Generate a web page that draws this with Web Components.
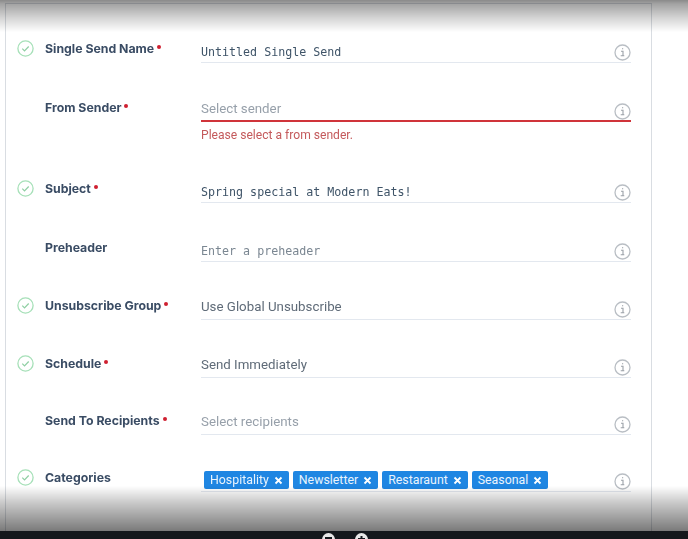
<!DOCTYPE html>
<html><head><meta charset="utf-8"><style>
html,body{margin:0;height:539px;overflow:hidden;background:#fff}
</style></head><body>
<send-form>
<form-row label="Single Send Name" required valid gap="31"><field-value mono>Untitled Single Send</field-value></form-row>
<form-row label="From Sender" required gap="31" error="Please select a from sender."><field-value muted>Select sender</field-value></form-row>
<form-row label="Subject" required valid gap="31"><field-value mono>Spring special at Modern Eats!</field-value></form-row>
<form-row label="Preheader" gap="31"><field-value mono muted>Enter a preheader</field-value></form-row>
<form-row label="Unsubscribe Group" required valid gap="30"><field-value>Use Global Unsubscribe</field-value></form-row>
<form-row label="Schedule" required valid gap="30"><field-value>Send Immediately</field-value></form-row>
<form-row label="Send To Recipients" required gap="29"><field-value muted>Select recipients</field-value></form-row>
<form-row label="Categories" valid gap="29"><tag-list><cat-tag>Hospitality</cat-tag><cat-tag>Newsletter</cat-tag><cat-tag>Restaraunt</cat-tag><cat-tag>Seasonal</cat-tag></tag-list></form-row>
</send-form>
<script>
function def(name,html,init){customElements.define(name,class extends HTMLElement{constructor(){super();this.attachShadow({mode:'open'}).innerHTML=html;}connectedCallback(){if(init)init(this,this.shadowRoot);}});}
def('send-form',`<style>
:host{display:block;position:relative;height:539px;overflow:hidden;font-family:"Inter","Liberation Sans",sans-serif}
.panel{box-sizing:border-box;height:528px;margin:3px 36px 0 5px;border:1px solid #d9dde2;border-bottom:0;filter:blur(.3px)}
.top,.bottom{position:absolute;left:0;right:0;pointer-events:none}
.top{top:0;height:32px;background:linear-gradient(rgba(0,0,0,.46) 0,rgba(0,0,0,.36) 4px,rgba(0,0,0,.18) 17px,rgba(0,0,0,0) 100%)}
.bottom{top:486px;height:45px;background:linear-gradient(rgba(0,0,0,0),rgba(0,0,0,.2) 35%,rgba(0,0,0,.52) 100%)}
.bar{position:absolute;left:0;right:0;top:531px;height:8px;background:#14181c;overflow:hidden}
.btn{position:absolute;top:2px;width:13px;height:13px;border-radius:50%;background:#e8e8e8}
.btn svg{display:block}
</style><div class="panel"><slot></slot></div><div class="top"></div><div class="bottom"></div>
<div class="bar"><span class="btn" style="left:322px"><svg width="13" height="13"><path d="M3 5h7" stroke="#14181c" stroke-width="2"/></svg></span><span class="btn" style="left:355px"><svg width="13" height="13"><path d="M3 6h7M6.500 3v6" stroke="#14181c" stroke-width="2"/></svg></span></div>`);
def('form-row',`<style>
:host{display:flex;align-items:flex-start;padding-left:11px;padding-right:20px;font-family:"Inter","Liberation Sans",sans-serif}
.check{flex:0 0 17px;width:17px;height:17px;margin-top:5px;margin-right:11px}
.check svg{display:block}
.label{flex:0 0 156px;box-sizing:border-box;padding-top:4.500px;font:700 12.3px/18px "Inter","Liberation Sans",sans-serif;color:#3a4c64;white-space:nowrap}
.dot{display:inline-block;width:4px;height:4px;border-radius:50%;background:#cf1f30;margin-left:3px;vertical-align:4px}
.main{flex:1;min-width:0}
.box{box-sizing:border-box;height:28px;display:flex;align-items:flex-end;justify-content:space-between;border-bottom:1px solid #e3e8ef;padding-bottom:3px}
.box.err{border-bottom:2px solid #d0343a;padding-bottom:2px}
.info{flex:0 0 17px;margin:0 0 -2px;display:block}
.msg{height:22px;font:400 12.1px/26px "Roboto","Liberation Sans",sans-serif;color:#c45a5c}
</style><div class="check"></div><div class="label"></div><div class="main"><div class="box"><slot></slot><svg class="info" width="17" height="17" viewBox="0 0 17 17" fill="none"><circle cx="8.500" cy="8.500" r="7.500" stroke="#b9bec4" stroke-width="1.300"/><path d="M7 7.200h2v4.300M6.700 11.700h3.600M8 4.800h1.200" stroke="#9ba1a8" stroke-width="1.100"/></svg></div></div>`,(h,s)=>{
h.style.marginTop=(h.getAttribute('gap')||30)+'px';
const l=s.querySelector('.label');l.textContent=h.getAttribute('label');
if(h.hasAttribute('required')){const d=document.createElement('span');d.className='dot';l.append(d);}
if(h.hasAttribute('valid'))s.querySelector('.check').innerHTML='<svg width="17" height="17" viewBox="0 0 17 17" fill="none"><circle cx="8.500" cy="8.500" r="7.600" stroke="#a6e0b8" stroke-width="1.300"/><path d="M5.300 8.700l2.200 2.200 4.200-4.400" stroke="#8fcfa3" stroke-width="1.200"/></svg>';
if(h.hasAttribute('error')){s.querySelector('.box').classList.add('err');const m=document.createElement('div');m.className='msg';m.textContent=h.getAttribute('error');s.querySelector('.main').append(m);}
});
def('field-value',`<style>
:host{display:block;font:400 13.3px/18px "Roboto","Liberation Sans",sans-serif;color:#5f6b78;white-space:pre}
:host([muted]){color:#97a0aa}
:host([mono]){font:400 11.66px/18px "DejaVu Sans Mono","Liberation Mono",monospace;color:#3f5468;margin-bottom:-2px}
:host([mono][muted]){color:#7b8792}
</style><slot></slot>`);
def('tag-list',`<style>:host{display:flex;gap:4px;margin-left:3px;margin-bottom:-1px}</style><slot></slot>`);
def('cat-tag',`<style>
:host{display:flex;align-items:center;height:18px;box-sizing:border-box;padding:0 6px;background:#1f86e2;border-radius:2px;color:#eaf4fd;font:400 12.35px/18px "Roboto","Liberation Sans",sans-serif;white-space:nowrap}
svg{margin-left:5px;display:block}
</style><slot></slot><svg width="9" height="9" viewBox="0 0 9 9"><path d="M1.500 1.500l6 6M7.500 1.500l-6 6" stroke="#fff" stroke-width="1.800"/></svg>`);
</script>
</body></html>
